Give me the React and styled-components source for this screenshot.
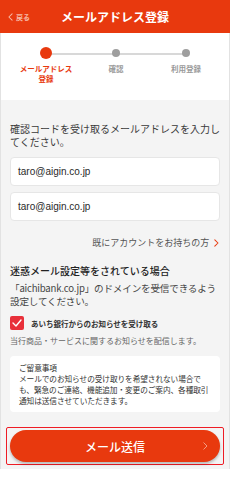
import React from "react";
import styled, { createGlobalStyle } from "styled-components";

const Global = createGlobalStyle`
  html, body { margin: 0; padding: 0; background: #fff; }
  body { font-family: "Noto Sans CJK JP", "Noto Sans", sans-serif; }
  * { box-sizing: border-box; }
`;

const Page = styled.div`
  width: 230px;
  height: 481px;
  display: flex;
  flex-direction: column;
  background: #fff;
  overflow: hidden;
`;

const Header = styled.header`
  height: 33px;
  flex: none;
  background: #e8390e;
  display: grid;
  grid-template-columns: 1fr auto 1fr;
  align-items: center;
  padding: 0 8px;
`;

const Back = styled.div`
  display: flex;
  align-items: center;
  gap: 3px;
  color: #f7b9a6;
  font-size: 7px;
  font-weight: 700;
`;

const Title = styled.h1`
  margin: 0;
  color: #fff;
  font-size: 12px;
  font-weight: 700;
  letter-spacing: 0;
`;

const Body = styled.div`
  display: flex;
  flex-direction: column;
  border-left: 1px solid #e2e2e2;
  border-right: 1px solid #e2e2e2;
  background: #f4f4f4;
`;

const Stepper = styled.ol`
  list-style: none;
  margin: 0;
  padding: 14px 0 0 10px;
  height: 67px;
  background: #fff;
  display: grid;
  grid-template-columns: repeat(3, 70px);
`;

const Step = styled.li`
  position: relative;
  display: flex;
  flex-direction: column;
  align-items: center;
  &::before {
    content: "";
    display: ${(p) => (p.$last ? "none" : "block")};
    position: absolute;
    left: 50%;
    width: 70px;
    top: 6px;
    height: 2px;
    background: #d8d8d8;
  }
`;

const Dot = styled.span`
  position: relative;
  z-index: 1;
  width: ${(p) => (p.$active ? 12 : 8)}px;
  height: ${(p) => (p.$active ? 12 : 8)}px;
  margin-top: ${(p) => (p.$active ? 0 : 2)}px;
  margin-bottom: ${(p) => (p.$active ? 0 : 2)}px;
  border-radius: 50%;
  background: ${(p) => (p.$active ? "#e8390e" : "#9e9e9e")};
`;

const StepLabel = styled.span`
  margin-top: 5px;
  font-size: 7.5px;
  line-height: 9.5px;
  font-weight: 700;
  text-align: center;
  color: ${(p) => (p.$active ? "#e8390e" : "#9a9a9a")};
`;

const Main = styled.main`
  padding: 22px 9px 4px;
  display: flex;
  flex-direction: column;
`;

const Lead = styled.p`
  margin: 0;
  font-size: 10px;
  line-height: 13px;
  color: #3a3a3a;
`;

const Input = styled.div`
  margin-top: ${(p) => p.$mt}px;
  height: 29px;
  background: #fff;
  border: 1px solid #e6e6e6;
  border-radius: 4px;
  display: flex;
  align-items: center;
  padding-left: 7px;
  font-family: "Liberation Sans", Arial, sans-serif;
  font-size: 10px;
  color: #2a2a2a;
`;

const AccountLink = styled.div`
  margin-top: 15px;
  display: flex;
  justify-content: flex-end;
  align-items: center;
  gap: 5px;
  font-size: 9px;
  color: #555;
  padding-right: 1px;
`;

const Heading = styled.h2`
  margin: 15px 0 0;
  font-size: 10px;
  line-height: 13px;
  font-weight: 500;
  color: #222;
`;

const Domain = styled.p`
  margin: 5px 0 0;
  font-size: 9.6px;
  line-height: 13px;
  letter-spacing: -0.2px;
  color: #444;
`;

const NoWrap = styled.span`
  white-space: nowrap;
`;

const CheckRow = styled.label`
  margin-top: 8px;
  display: flex;
  align-items: center;
  gap: 7px;
  font-size: 7.5px;
  font-weight: 700;
  color: #333;
`;

const Box = styled.span`
  width: 14px;
  height: 14px;
  border-radius: 2px;
  background: #e8303a;
  display: flex;
  align-items: center;
  justify-content: center;
`;

const Small = styled.p`
  margin: 5px 0 0;
  font-size: 8px;
  line-height: 11px;
  color: #666;
`;

const Notice = styled.div`
  margin-top: 10px;
  background: #fff;
  border-radius: 4px;
  padding: 6px 6px 6px 9px;
  font-size: 7.7px;
  line-height: 11px;
  letter-spacing: -0.1px;
  color: #333;
`;

const ButtonFrame = styled.div`
  margin: 15px -4px 0;
  padding: 2px 3px;
  border: 1.5px solid #ee1c25;
  border-radius: 2px;
`;

const Button = styled.button`
  width: 100%;
  height: 32px;
  border: none;
  border-radius: 16px;
  background: #e8390e;
  box-shadow: 0 2px 3px rgba(0, 0, 0, 0.25);
  display: grid;
  grid-template-columns: 1fr auto 1fr;
  align-items: center;
  padding: 0 12px;
  color: #fff;
  font-family: inherit;
  font-size: 12px;
  font-weight: 500;
`;

const ChevronSlot = styled.span`
  justify-self: end;
  display: flex;
`;

const Chevron = ({ color, size = 8, w = 1.3 }) => (
  <svg width={size * 0.6} height={size} viewBox="0 0 6 10" fill="none">
    <path d="M1 1l4 4-4 4" stroke={color} strokeWidth={w} strokeLinecap="round" strokeLinejoin="round" />
  </svg>
);

export default function App() {
  return (
    <Page>
      <Global />
      <Header>
        <Back>
          <svg width="5" height="8" viewBox="0 0 6 10" fill="none">
            <path d="M5 1L1 5l4 4" stroke="#f7b9a6" strokeWidth="1.3" strokeLinecap="round" strokeLinejoin="round" />
          </svg>
          戻る
        </Back>
        <Title>メールアドレス登録</Title>
        <span />
      </Header>
      <Body>
        <Stepper>
          <Step>
            <Dot $active />
            <StepLabel $active>
              メールアドレス
              <br />
              登録
            </StepLabel>
          </Step>
          <Step>
            <Dot />
            <StepLabel>確認</StepLabel>
          </Step>
          <Step $last>
            <Dot />
            <StepLabel>利用登録</StepLabel>
          </Step>
        </Stepper>
        <Main>
          <Lead>確認コードを受け取るメールアドレスを入力してください。</Lead>
          <Input $mt={9}>taro@aigin.co.jp</Input>
          <Input $mt={6}>taro@aigin.co.jp</Input>
          <AccountLink>
            既にアカウントをお持ちの方
            <Chevron color="#e8390e" />
          </AccountLink>
          <Heading>迷惑メール設定等をされている場合</Heading>
          <Domain>
            <NoWrap>「aichibank.co.jp」のドメインを受信できるよう</NoWrap>
            <br />
            設定してください。
          </Domain>
          <CheckRow>
            <Box>
              <svg width="10" height="8" viewBox="0 0 10 8" fill="none">
                <path d="M1 4l3 3 5-6" stroke="#fff" strokeWidth="1.4" strokeLinecap="round" strokeLinejoin="round" />
              </svg>
            </Box>
            あいち銀行からのお知らせを受け取る
          </CheckRow>
          <Small>当行商品・サービスに関するお知らせを配信します。</Small>
          <Notice>
            ご留意事項
            <br />
            メールでのお知らせの受け取りを希望されない場合でも、緊急のご連絡、機能追加・変更のご案内、各種取引通知は送信させていただきます。
          </Notice>
          <ButtonFrame>
            <Button>
              <span />
              メール送信
              <ChevronSlot>
                <Chevron color="#f5b8a5" size={8} w={1} />
              </ChevronSlot>
            </Button>
          </ButtonFrame>
        </Main>
      </Body>
    </Page>
  );
}
